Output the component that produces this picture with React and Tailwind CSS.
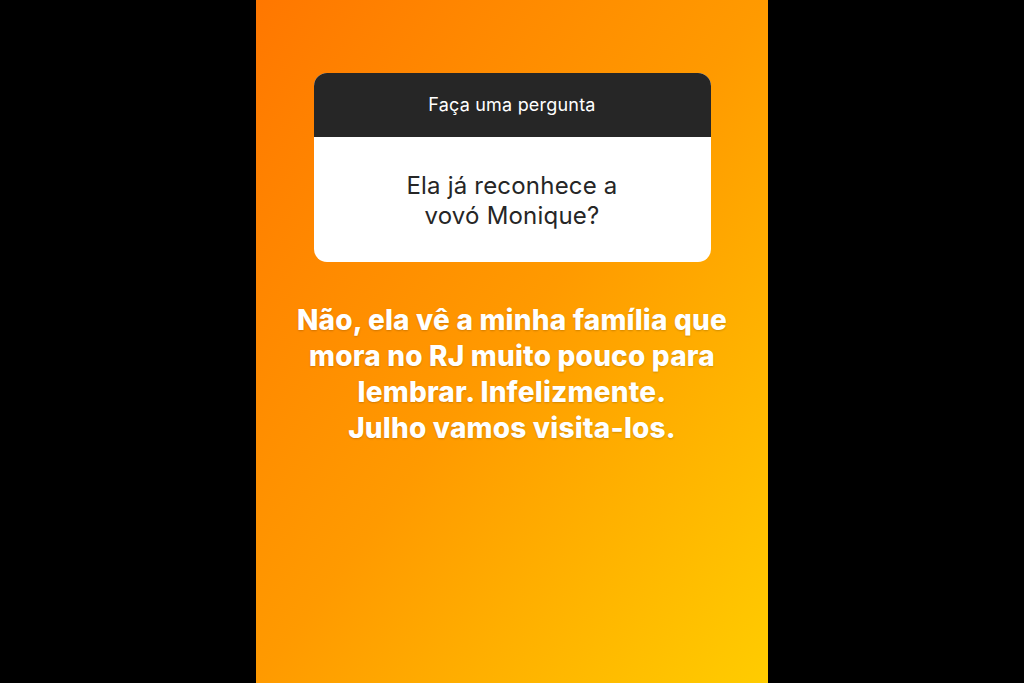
import React from 'react';

const App = () => {
  return (
    <div className="w-[1024px] h-[683px] bg-black flex justify-center overflow-hidden">
      {/* Story panel */}
      <div className="w-[512px] h-full bg-gradient-to-br from-[#ff7700] via-[#ff9a00] to-[#ffcc00] flex flex-col items-center pt-[73px] font-['Inter',sans-serif]">
        {/* Question card */}
        <div className="w-[397px] rounded-[13px] overflow-hidden bg-white">
          <div className="h-[64px] bg-[#262626] flex items-center justify-center text-white text-[18px] tracking-[0.2px] leading-none pb-[1px]">
            Faça uma pergunta
          </div>
          <div className="h-[125px] flex items-center justify-center text-center text-[#262626] text-[24px] tracking-[0.2px] leading-[30px] pt-[3px]">
            Ela já reconhece a<br />vovó Monique?
          </div>
        </div>

        {/* Answer */}
        <p className="mt-[40px] text-center text-white font-extrabold text-[28px] leading-[36px] tracking-[0.2px] [text-shadow:0_1px_2px_rgba(0,0,0,0.18)]">
          Não, ela vê a minha família que<br />
          mora no RJ muito pouco para<br />
          lembrar. Infelizmente.<br />
          Julho vamos visita-los.
        </p>
      </div>
    </div>
  );
};

export default App;
